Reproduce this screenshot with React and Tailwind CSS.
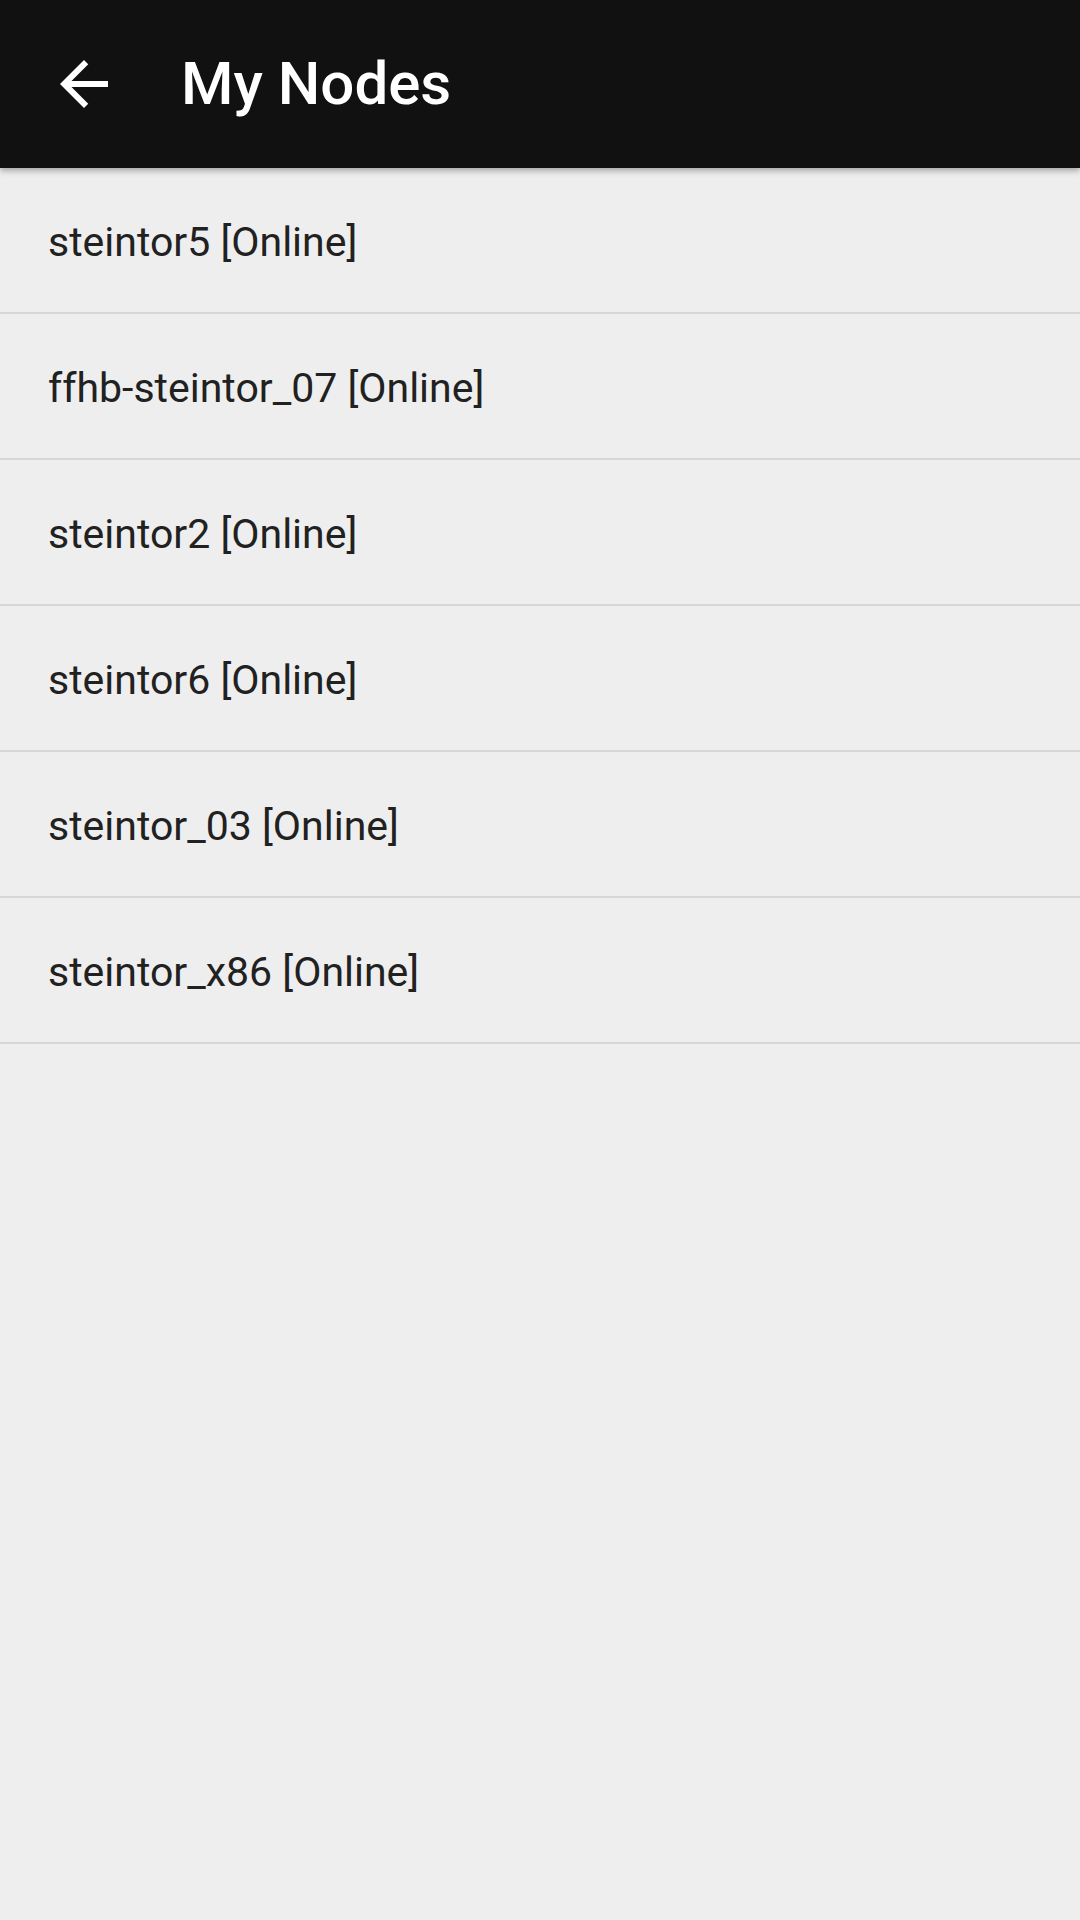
const nodes = [
  'steintor5 [Online]',
  'ffhb-steintor_07 [Online]',
  'steintor2 [Online]',
  'steintor6 [Online]',
  'steintor_03 [Online]',
  'steintor_x86 [Online]',
];

export default function App() {
  return (
    <div className="min-h-[1920px] w-[1080px] bg-[#eeeeee] font-['Roboto',sans-serif]">
      {/* toolbar */}
      <header className="relative z-10 flex h-[168px] items-center bg-[#111111] shadow-[0_3px_6px_rgba(0,0,0,0.3)]">
        <button className="ml-[48px] flex h-[72px] w-[72px] items-center justify-center">
          <svg width="72" height="72" viewBox="0 0 24 24" fill="#ffffff">
            <path d="M20 11H7.83l5.59-5.59L12 4l-8 8 8 8 1.41-1.41L7.83 13H20v-2z" />
          </svg>
        </button>
        <h1 className="ml-[61px] text-[60px] font-medium leading-none text-white">My Nodes</h1>
      </header>

      {/* node list */}
      <ul>
        {nodes.map(name => (
          <li key={name} className="flex h-[146px] items-center border-b-2 border-[#d6d6d6] pl-[48px] pt-[5px] text-[41px] text-[#212121]">
            {name}
          </li>
        ))}
      </ul>
    </div>
  );
}
